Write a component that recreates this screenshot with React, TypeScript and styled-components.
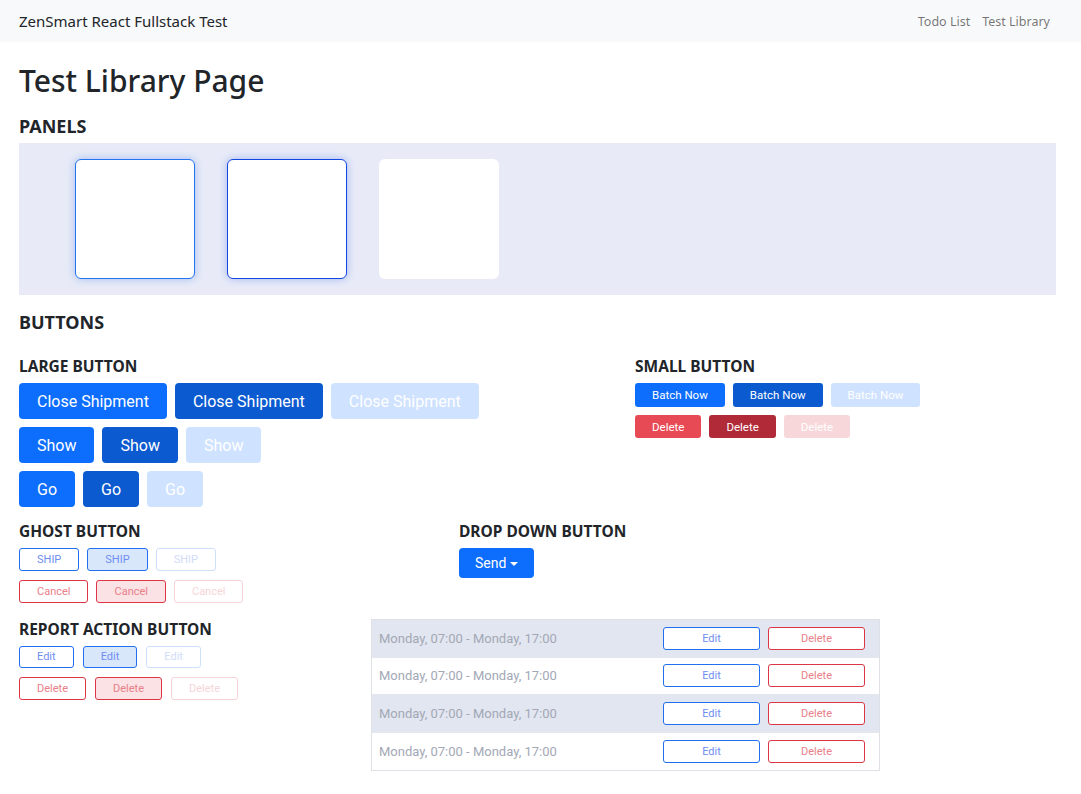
import React from "react";
import styled, { createGlobalStyle, css } from "styled-components";

const GlobalStyle = createGlobalStyle`
  * { box-sizing: border-box; }
  body {
    margin: 0;
    background: #ffffff;
    color: #212529;
    font-family: "Noto Sans", "Open Sans", sans-serif;
  }
`;

const Navbar = styled.nav`
  height: 42px;
  background: #f8f9fa;
  display: flex;
  align-items: center;
  justify-content: space-between;
  padding: 0 31px 0 19px;
`;

const Brand = styled.div`
  font-size: 15px;
  color: #212529;
`;

const NavLinks = styled.div`
  display: flex;
  gap: 12px;
`;

const NavLink = styled.a`
  font-size: 12.5px;
  color: rgba(0, 0, 0, 0.55);
  text-decoration: none;
`;

const Page = styled.main`
  padding: 0 25px 0 19px;
`;

const Title = styled.h1`
  font-size: 30px;
  font-weight: 500;
  line-height: 38px;
  margin: 20px 0 15px;
`;

const SectionTitle = styled.h2<{ $mb?: number }>`
  font-size: 18px;
  font-weight: 700;
  line-height: 22px;
  margin: 0 0 ${(p) => p.$mb ?? 7}px;
`;

const SubTitle = styled.h3`
  font-size: 15.5px;
  font-weight: 700;
  line-height: 20px;
  margin: 0 0 7px;
`;

const PanelArea = styled.div`
  background: #e8ebf7;
  padding: 16px 56px;
  display: flex;
  gap: 32px;
  margin-bottom: 16px;
`;

type PanelKind = "default" | "active" | "plain";

const Panel = styled.div<{ $kind: PanelKind }>`
  width: 120px;
  height: 120px;
  background: #fff;
  border-radius: 6px;
  ${(p) =>
    p.$kind === "default" &&
    css`
      border: 1px solid #2574f0;
      box-shadow: 0 0 8px rgba(37, 99, 235, 0.35);
    `}
  ${(p) =>
    p.$kind === "active" &&
    css`
      border: 1px solid #1247e0;
      box-shadow: 0 0 8px rgba(37, 80, 235, 0.35);
    `}
`;

const ButtonsGrid = styled.div`
  display: grid;
  grid-template-columns: 616px 1fr;
  margin-top: 23px;
`;

const Stack = styled.div<{ $gap: number }>`
  display: flex;
  flex-direction: column;
  gap: ${(p) => p.$gap}px;
`;

const Row = styled.div<{ $gap?: number }>`
  display: flex;
  gap: ${(p) => p.$gap ?? 8}px;
`;

type Variant = "normal" | "active" | "disabled";

const blueFill = {
  normal: "#0d6efd",
  active: "#0b5ad0",
  disabled: "#cfe2ff",
};
const redFill = {
  normal: "#e84a55",
  active: "#b02a37",
  disabled: "#f8d7da",
};

const BaseButton = styled.button`
  font-family: Roboto, "Liberation Sans", sans-serif;
  border-radius: 4px;
  cursor: pointer;
  white-space: nowrap;
  display: inline-flex;
  align-items: center;
  justify-content: center;
`;

const LargeButton = styled(BaseButton)<{ $v: Variant }>`
  height: 36px;
  padding: 0 18px;
  font-size: 16px;
  color: #fff;
  border: none;
  background: ${(p) => blueFill[p.$v]};
`;

const SmallButton = styled(BaseButton)<{ $v: Variant; $tone: "blue" | "red" }>`
  height: ${(p) => (p.$tone === "blue" ? 24 : 23)}px;
  padding: 0 17px;
  font-size: 11.5px;
  border: none;
  border-radius: 3px;
  color: #fff;
  background: ${(p) => (p.$tone === "blue" ? blueFill[p.$v] : redFill[p.$v])};
`;

const ghostColors = {
  blue: {
    border: { normal: "#1f6ff0", active: "#1f6ff0", disabled: "#cfe0fd" },
    text: { normal: "#6f8ef2", active: "#6f8ef2", disabled: "#d2dcfa" },
    bg: { normal: "#fff", active: "#d9e7fb", disabled: "#fff" },
  },
  red: {
    border: { normal: "#dc3545", active: "#dc3545", disabled: "#f6d3d7" },
    text: { normal: "#e8808a", active: "#e8808a", disabled: "#f6d5d9" },
    bg: { normal: "#fff", active: "#fbe2e4", disabled: "#fff" },
  },
};

const GhostButton = styled(BaseButton)<{
  $v: Variant;
  $tone: "blue" | "red";
  $h?: number;
  $w?: number;
}>`
  height: ${(p) => p.$h ?? 23}px;
  ${(p) => (p.$w ? `width: ${p.$w}px;` : "padding: 0 17px;")}
  font-size: 11px;
  padding-bottom: 1px;
  border-radius: 3px;
  border: 1px solid ${(p) => ghostColors[p.$tone].border[p.$v]};
  color: ${(p) => ghostColors[p.$tone].text[p.$v]};
  background: ${(p) => ghostColors[p.$tone].bg[p.$v]};
`;

const DropButton = styled(BaseButton)`
  height: 30px;
  padding: 0 16px;
  font-size: 14px;
  color: #fff;
  border: none;
  background: #0d6efd;
  gap: 4px;
  &::after {
    content: "";
    display: inline-block;
    border-top: 4.5px solid #fff;
    border-left: 4.5px solid transparent;
    border-right: 4.5px solid transparent;
    margin-top: 1px;
  }
`;

const LowerGrid = styled.div<{ $cols: string; $mt: number }>`
  display: grid;
  grid-template-columns: ${(p) => p.$cols};
  margin-top: ${(p) => p.$mt}px;
  align-items: start;
`;

const Table = styled.div`
  width: 509px;
  border: 1px solid #dee2e6;
`;

const TableRow = styled.div<{ $striped: boolean }>`
  display: flex;
  align-items: center;
  height: 37.5px;
  background: ${(p) => (p.$striped ? "#e2e6f0" : "#fff")};
  border-bottom: 1px solid #e4e7ec;
  &:last-child {
    border-bottom: none;
  }
`;

const TimeCell = styled.div`
  flex: 0 0 284px;
  padding-left: 7px;
  font-family: Roboto, "Liberation Sans", sans-serif;
  font-size: 13px;
  color: #a3a8b6;
`;

const ActionCell = styled.div`
  display: flex;
  gap: 8px;
  padding-left: 7px;
`;

const largeSets = ["Close Shipment", "Show", "Go"];
const variants: Variant[] = ["normal", "active", "disabled"];

export default function App() {
  return (
    <>
      <GlobalStyle />
      <Navbar>
        <Brand>ZenSmart React Fullstack Test</Brand>
        <NavLinks>
          <NavLink href="#">Todo List</NavLink>
          <NavLink href="#">Test Library</NavLink>
        </NavLinks>
      </Navbar>
      <Page>
        <Title>Test Library Page</Title>
        <SectionTitle $mb={6}>PANELS</SectionTitle>
        <PanelArea>
          <Panel $kind="default" />
          <Panel $kind="active" />
          <Panel $kind="plain" />
        </PanelArea>
        <SectionTitle>BUTTONS</SectionTitle>
        <ButtonsGrid>
          <div>
            <SubTitle>LARGE BUTTON</SubTitle>
            <Stack $gap={8}>
              {largeSets.map((label) => (
                <Row key={label}>
                  {variants.map((v) => (
                    <LargeButton key={v} $v={v}>
                      {label}
                    </LargeButton>
                  ))}
                </Row>
              ))}
            </Stack>
          </div>
          <div>
            <SubTitle>SMALL BUTTON</SubTitle>
            <Stack $gap={8}>
              <Row>
                {variants.map((v) => (
                  <SmallButton key={v} $v={v} $tone="blue">
                    Batch Now
                  </SmallButton>
                ))}
              </Row>
              <Row>
                {variants.map((v) => (
                  <SmallButton key={v} $v={v} $tone="red">
                    Delete
                  </SmallButton>
                ))}
              </Row>
            </Stack>
          </div>
        </ButtonsGrid>
        <LowerGrid $cols="440px 1fr" $mt={14}>
          <div>
            <SubTitle>GHOST BUTTON</SubTitle>
            <Stack $gap={9}>
              <Row>
                {variants.map((v) => (
                  <GhostButton key={v} $v={v} $tone="blue">
                    SHIP
                  </GhostButton>
                ))}
              </Row>
              <Row>
                {variants.map((v) => (
                  <GhostButton key={v} $v={v} $tone="red">
                    Cancel
                  </GhostButton>
                ))}
              </Row>
            </Stack>
          </div>
          <div>
            <SubTitle>DROP DOWN BUTTON</SubTitle>
            <DropButton>Send</DropButton>
          </div>
        </LowerGrid>
        <LowerGrid $cols="352px 1fr" $mt={16}>
          <div>
            <SubTitle>REPORT ACTION BUTTON</SubTitle>
            <Stack $gap={9}>
              <Row $gap={9}>
                {variants.map((v) => (
                  <GhostButton key={v} $v={v} $tone="blue" $h={22}>
                    Edit
                  </GhostButton>
                ))}
              </Row>
              <Row $gap={9}>
                {variants.map((v) => (
                  <GhostButton key={v} $v={v} $tone="red">
                    Delete
                  </GhostButton>
                ))}
              </Row>
            </Stack>
          </div>
          <Table>
            {[0, 1, 2, 3].map((i) => (
              <TableRow key={i} $striped={i % 2 === 0}>
                <TimeCell>Monday, 07:00 - Monday, 17:00</TimeCell>
                <ActionCell>
                  <GhostButton $v="normal" $tone="blue" $w={97}>
                    Edit
                  </GhostButton>
                  <GhostButton $v="normal" $tone="red" $w={97}>
                    Delete
                  </GhostButton>
                </ActionCell>
              </TableRow>
            ))}
          </Table>
        </LowerGrid>
      </Page>
    </>
  );
}
